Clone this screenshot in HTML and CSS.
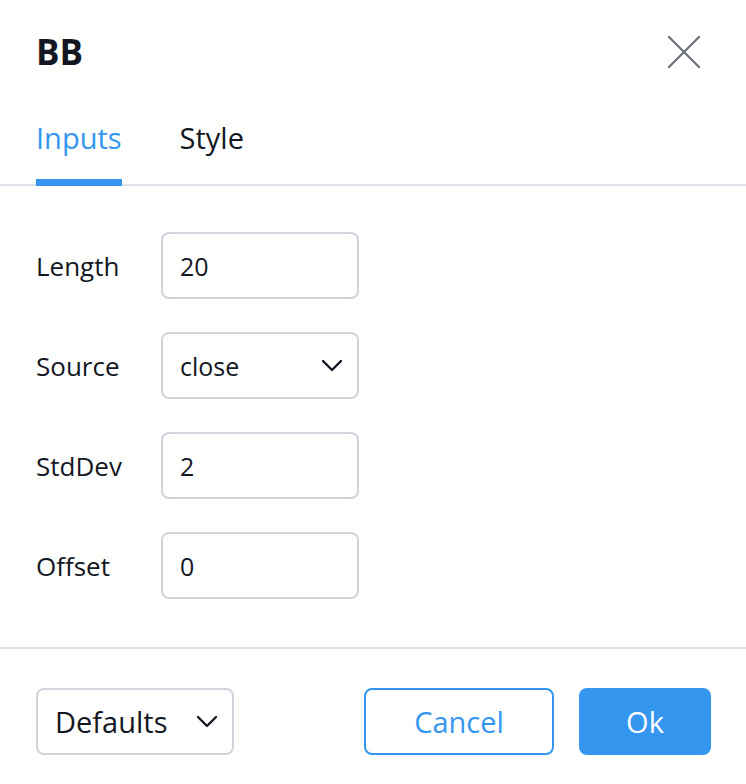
FILE: index.html
```html
<!DOCTYPE html>
<html>
<head>
<meta charset="utf-8">
<link rel="stylesheet" href="styles.css">
</head>
<body>
<div class="dialog">
  <div class="header">
    <div class="title">BB</div>
    <button class="close" aria-label="Close">
      <svg width="32" height="32" viewBox="0 0 32 32"><path d="M1 1L31 31M31 1L1 31" stroke="#6a6d78" stroke-width="2.2" stroke-linecap="round" fill="none"/></svg>
    </button>
  </div>
  <div class="tabs">
    <div class="tab active">Inputs</div>
    <div class="tab">Style</div>
  </div>
  <div class="content">
    <div class="row"><div class="label">Length</div><div class="field">20</div></div>
    <div class="row"><div class="label">Source</div><div class="field select">close<svg class="chev" width="22" height="13" viewBox="0 0 22 13"><path d="M2 2L11 11L20 2" stroke="#131722" stroke-width="2.4" fill="none" stroke-linecap="round" stroke-linejoin="round"/></svg></div></div>
    <div class="row"><div class="label">StdDev</div><div class="field">2</div></div>
    <div class="row"><div class="label">Offset</div><div class="field">0</div></div>
  </div>
  <div class="footer">
    <div class="btn defaults">Defaults<svg class="chev" width="22" height="13" viewBox="0 0 22 13"><path d="M2 2L11 11L20 2" stroke="#131722" stroke-width="2.4" fill="none" stroke-linecap="round" stroke-linejoin="round"/></svg></div>
    <div class="spacer"></div>
    <div class="btn cancel">Cancel</div>
    <div class="btn ok">Ok</div>
  </div>
</div>
</body>
</html>
```
FILE: styles.css
```css
html, body {
  margin: 0;
  padding: 0;
  background: #ffffff;
}
body {
  font-family: "Open Sans", "Noto Sans", sans-serif;
  color: #131722;
}
.dialog {
  width: 746px;
  height: 784px;
  display: flex;
  flex-direction: column;
}
.header {
  display: flex;
  align-items: center;
  justify-content: space-between;
  padding: 28px 46px 0 36px;
  height: 48px;
}
.title {
  font-weight: 700;
  font-size: 35px;
  line-height: 48px;
}
.close {
  border: 0;
  background: none;
  padding: 0;
  width: 32px;
  height: 32px;
  display: flex;
}
.tabs {
  display: flex;
  gap: 58px;
  padding: 0 36px;
  margin-top: 42px;
  border-bottom: 2px solid #e0e3eb;
}
.tab {
  font-size: 29px;
  line-height: 40px;
  padding-bottom: 21px;
  border-bottom: 7px solid transparent;
  margin-bottom: -2px;
  color: #131722;
}
.tab.active {
  color: #3596f0;
  border-bottom-color: #3596f0;
}
.content {
  display: flex;
  flex-direction: column;
  gap: 33px;
  padding: 46px 36px 48px;
  border-bottom: 2px solid #e0e3eb;
}
.row {
  display: flex;
  align-items: center;
}
.label {
  width: 125px;
  font-size: 26px;
}
.field {
  box-sizing: border-box;
  width: 198px;
  height: 67px;
  border: 2px solid #d1d4dc;
  border-radius: 8px;
  padding: 0 14px 0 17px;
  font-size: 25px;
  display: flex;
  align-items: center;
  justify-content: space-between;
}
.footer {
  display: flex;
  align-items: center;
  padding: 39px 35px 0 36px;
}
.spacer {
  flex: 1;
}
.btn {
  box-sizing: border-box;
  height: 67px;
  border-radius: 8px;
  font-size: 29px;
  display: flex;
  align-items: center;
  justify-content: center;
}
.defaults {
  width: 198px;
  border: 2px solid #d1d4dc;
  justify-content: space-between;
  padding: 0 14px 0 17px;
}
.cancel {
  width: 190px;
  border: 2px solid #3596f0;
  color: #3596f0;
  margin-right: 25px;
}
.ok {
  width: 132px;
  background: #3596f0;
  color: #ffffff;
}
.chev {
  display: block;
}
```
